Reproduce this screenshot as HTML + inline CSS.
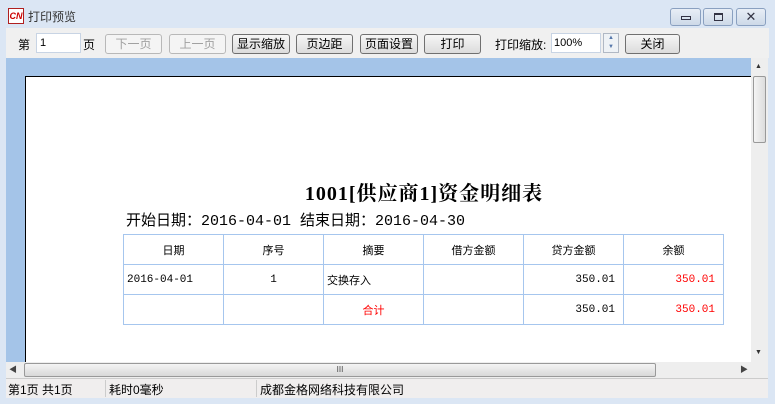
<!DOCTYPE html>
<html><head><meta charset="utf-8"><style>
*{margin:0;padding:0;box-sizing:border-box}
body{width:775px;height:404px;background:#dbe6f4;font-family:"Liberation Sans","Noto Sans CJK SC",sans-serif;font-size:12px;position:relative;overflow:hidden;color:#000}
.abs{position:absolute}
.btn{position:absolute;top:34px;height:20px;border:1px solid #707070;border-radius:3px;background:linear-gradient(#f6f6f6,#dcdcdc);font-size:12px;text-align:center;line-height:18px}
.dis{color:#a0a0a0;border-color:#b8b8b8;background:#f4f4f4}
.wb{position:absolute;top:8px;height:18px;border:1px solid #8aa0c0;border-radius:3px;background:linear-gradient(#e8eef6,#cdd9e8)}
table{position:absolute;left:123px;top:234px;border-collapse:collapse;font-size:12px}
td{border:1px solid #a6c6ee;width:100px;height:30px;padding:0 3px;font-family:"Liberation Mono","Noto Sans CJK SC",monospace;font-size:11px}
.c{text-align:center}.r{text-align:right;padding-right:8px}.red{color:#f00}
</style></head><body>
<div class="abs" style="left:8px;top:8px;width:16px;height:16px;border:1px solid #b02020;background:#fff;color:#c00;font-size:9px;font-weight:bold;line-height:14px;text-align:center;font-style:italic">CN</div>
<div class="abs" style="left:28px;top:8px;font-size:12px;color:#333">打印预览</div>
<div class="wb" style="left:670px;width:31px"><div class="abs" style="left:10px;top:7px;width:10px;height:4px;border:1px solid #334"></div></div>
<div class="wb" style="left:703px;width:30px"><div class="abs" style="left:10px;top:4px;width:9px;height:8px;border:1px solid #334;border-top-width:2px"></div></div>
<div class="wb" style="left:736px;width:30px;text-align:center;line-height:16px;color:#334;font-size:13px">✕</div>
<div class="abs" style="left:6px;top:28px;width:763px;height:30px;background:#f0f0f0"></div>
<div class="abs" style="left:18px;top:36px">第</div>
<div class="abs" style="left:36px;top:33px;width:45px;height:20px;background:#fff;border:1px solid #c8d4e4;padding-left:3px;line-height:18px;font-size:11px">1</div>
<div class="abs" style="left:83px;top:36px">页</div>
<div class="btn dis" style="left:105px;width:57px">下一页</div>
<div class="btn dis" style="left:169px;width:57px">上一页</div>
<div class="btn" style="left:232px;width:58px">显示缩放</div>
<div class="btn" style="left:296px;width:57px">页边距</div>
<div class="btn" style="left:360px;width:58px">页面设置</div>
<div class="btn" style="left:424px;width:57px">打印</div>
<div class="abs" style="left:495px;top:36px">打印缩放:</div>
<div class="abs" style="left:551px;top:33px;width:50px;height:20px;background:#fff;border:1px solid #c8d4e4;padding-left:2px;line-height:18px;font-size:11px">100%</div>
<div class="abs" style="left:603px;top:33px;width:16px;height:20px;border:1px solid #b0b8c4;background:#eef2f6;font-size:6px;color:#57a;text-align:center;line-height:9px">▲<br>▼</div>
<div class="btn" style="left:625px;width:55px">关闭</div>
<div class="abs" style="left:6px;top:58px;width:745px;height:304px;background:#a4c4e8"></div>
<div class="abs" style="left:25px;top:76px;width:726px;height:286px;background:#fff;border-left:1px solid #000;border-top:1px solid #000"></div>
<div class="abs" style="left:751px;top:58px;width:17px;height:304px;background:#eeeeee"></div>
<div class="abs" style="left:753px;top:76px;width:13px;height:67px;border:1px solid #999;border-radius:2px;background:linear-gradient(90deg,#f4f4f4,#dcdcdc)"></div>
<div class="abs" style="left:755px;top:63px;font-size:7px;color:#333">▲</div>
<div class="abs" style="left:755px;top:349px;font-size:7px;color:#333">▼</div>
<div class="abs" style="left:6px;top:362px;width:762px;height:16px;background:#eeeeee"></div>
<div class="abs" style="left:24px;top:363px;width:632px;height:14px;border:1px solid #999;border-radius:2px;background:linear-gradient(#f4f4f4,#d8d8d8);text-align:center;font-size:8px;line-height:12px;color:#444">III</div>
<div class="abs" style="left:9px;top:364px;font-size:8px;color:#444">◀</div>
<div class="abs" style="left:740px;top:364px;font-size:8px;color:#444">▶</div>
<div class="abs" style="left:6px;top:378px;width:762px;height:20px;background:#f0eeee;border-top:1px solid #ccc"></div>
<div class="abs" style="left:105px;top:380px;width:1px;height:17px;background:#ccc"></div>
<div class="abs" style="left:256px;top:380px;width:1px;height:17px;background:#ccc"></div>
<div class="abs" style="left:8px;top:381px">第1页 共1页</div>
<div class="abs" style="left:109px;top:381px">耗时0毫秒</div>
<div class="abs" style="left:260px;top:381px">成都金格网络科技有限公司</div>
<div class="abs" style="left:123px;top:177px;width:602px;text-align:center;font-family:'Liberation Serif','Noto Serif CJK SC',serif;font-weight:bold;font-size:20px;letter-spacing:1px">1001[供应商1]资金明细表</div>
<div class="abs" style="left:126px;top:209px;font-family:'Liberation Mono','Noto Sans CJK SC',monospace;font-size:15px">开始日期：2016-04-01 结束日期：2016-04-30</div>
<table>
<tr><td class="c">日期</td><td class="c">序号</td><td class="c">摘要</td><td class="c">借方金额</td><td class="c">贷方金额</td><td class="c">余额</td></tr>
<tr><td>2016-04-01</td><td class="c">1</td><td>交换存入</td><td></td><td class="r">350.01</td><td class="r red">350.01</td></tr>
<tr><td></td><td></td><td class="c red">合计</td><td></td><td class="r">350.01</td><td class="r red">350.01</td></tr>
</table>
</body></html>
